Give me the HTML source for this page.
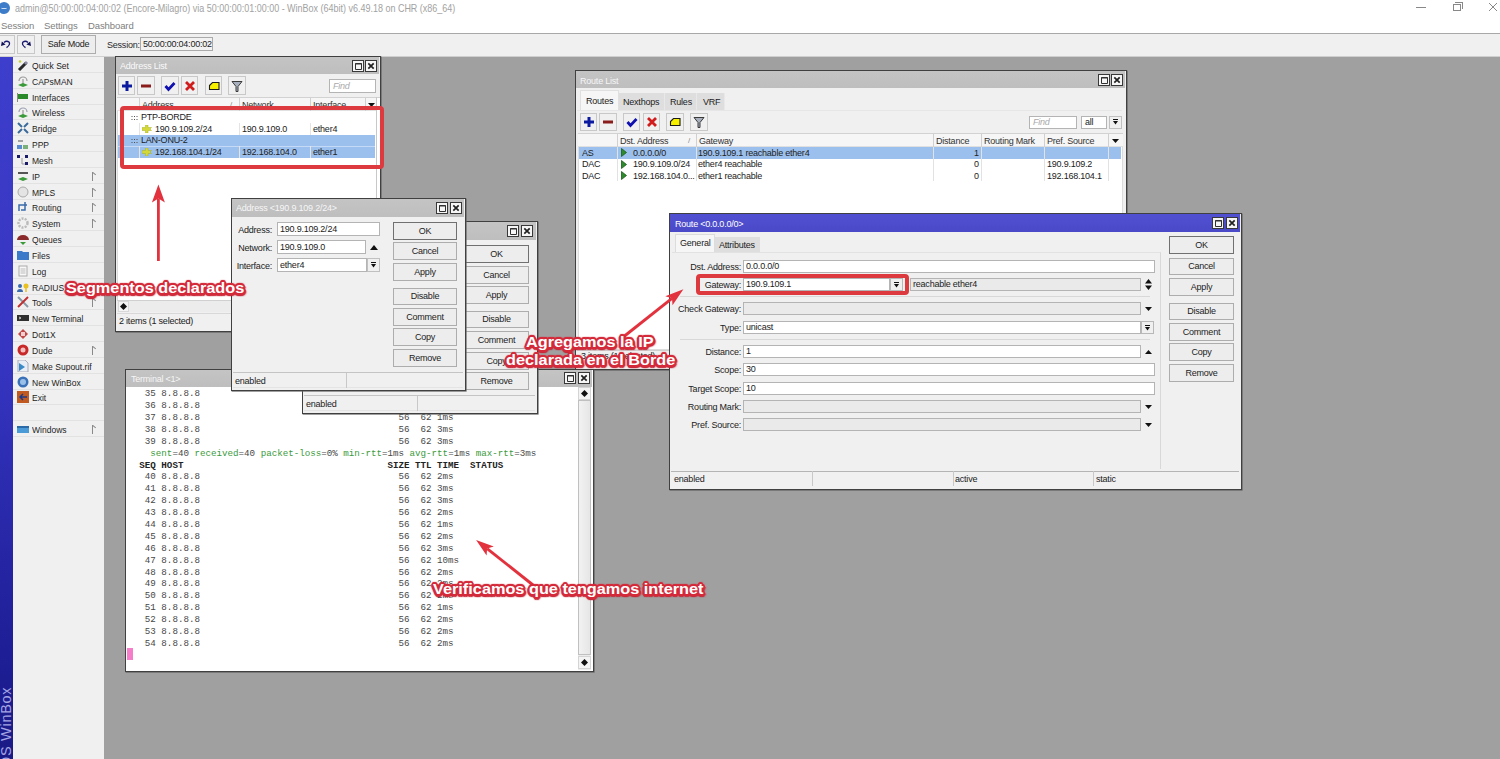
<!DOCTYPE html><html><head><meta charset="utf-8"><style>

*{box-sizing:border-box;margin:0;padding:0}
html,body{width:1500px;height:759px;overflow:hidden;background:#a0a0a0;font-family:"Liberation Sans",sans-serif;font-size:9px;color:#2a2a2a;letter-spacing:-0.22px}
.a{position:absolute}
.t{position:absolute;white-space:pre;line-height:1}
.win{position:absolute;background:#f0f0f0;border:1px solid #404040;box-shadow:0.6px 0.6px 0 #606060;overflow:hidden}
.tl{position:absolute;left:0;top:0;right:0;height:17px;background:#acacac}
.tl span{position:absolute;left:4px;top:4px;color:#fff;white-space:pre}
.wb{position:absolute;width:12px;height:12px;border:1px solid #383838;background:#f6f6f6}
.btn{position:absolute;background:#ededed;border:1px solid #adadad;text-align:center;color:#222;white-space:pre}
.fld{position:absolute;background:#fff;border:1px solid #b4b4b4;padding-left:2px;white-space:pre;color:#222;overflow:hidden}
.fldg{background:#eaeaea}
.lbl{position:absolute;text-align:right;white-space:pre;color:#222}
.sb{position:absolute;height:15px;background:#f0f0f0;border-top:1px solid #d4d4d4}
.sb span{position:absolute;top:3px;white-space:pre}
.sbd{position:absolute;top:1px;width:1px;height:13px;background:#c4c4c4}
.tbn{position:absolute;border:1px solid #c8c8c8;background:#f0f0f0}
.mi{position:absolute;left:0;width:91px;height:16px;border-bottom:1px solid #e2e2e2}
.mi span{position:absolute;left:19px;top:4px;white-space:pre;color:#1e1e1e;line-height:1;font-size:9.8px;letter-spacing:0;transform:scaleX(0.87);transform-origin:0 0}
.mi .ic{position:absolute;left:4px;top:2px;width:12px;height:12px}
.mi .ar{position:absolute;left:79px;top:4px;width:4px;height:9px;border-left:1px solid #8a8a8a}
.mi .ar:after{content:"";position:absolute;left:0;top:0;width:4px;height:1px;background:#8a8a8a;transform:rotate(40deg);transform-origin:0 0}
.hdr{position:absolute;background:#f6f6f6;border-top:1px solid #d2d2d2;border-bottom:1px solid #e0e0e0}
.hc{position:absolute;top:0;height:100%;border-right:1px solid #d4d4d4}
.row{position:absolute;white-space:pre}
.ann{position:absolute;white-space:pre;font-weight:bold;font-size:16.3px;color:#fff;line-height:1;letter-spacing:0;transform:scaleY(0.94);transform-origin:0 0;
 text-shadow:0 0 1px #d42a3a,2px 0 0 #d42a3a,-2px 0 0 #d42a3a,0 2px 0 #d42a3a,0 -2px 0 #d42a3a,1.5px 1.5px 0 #d42a3a,-1.5px 1.5px 0 #d42a3a,1.5px -1.5px 0 #d42a3a,-1.5px -1.5px 0 #d42a3a,2.5px 1px 1px #d42a3a,-2.5px 1px 1px #d42a3a,1px 2.5px 1px #c82636,-1px 2.5px 1px #c82636,1px -2.5px 1px #d42a3a,-1px -2.5px 1px #d42a3a,2px 2px 2px #b82434}

</style></head><body>
<div class="a" style="left:0;top:0;width:1500px;height:33px;background:#fff"></div>
<div class="a" style="left:-2px;top:2px;width:12px;height:12px;border-radius:50%;background:#3c7cc8"></div>
<div class="a" style="left:1px;top:6px;width:6px;height:3px;border-bottom:1px solid #cfe0f4;border-radius:0 0 50% 50%"></div>
<div class="t" style="left:14.5px;top:3px;color:#a2a2a2;letter-spacing:0;font-size:10.5px;transform:scaleX(0.855);transform-origin:0 0">admin@50:00:00:04:00:02 (Encore-Milagro) via 50:00:00:01:00:00 - WinBox (64bit) v6.49.18 on CHR (x86_64)</div>
<div class="t" style="left:1px;top:20.5px;color:#808080;font-size:9.5px;letter-spacing:-0.1px">Session</div>
<div class="t" style="left:44px;top:20.5px;color:#808080;font-size:9.5px;letter-spacing:-0.1px">Settings</div>
<div class="t" style="left:88px;top:20.5px;color:#808080;font-size:9.5px;letter-spacing:-0.1px">Dashboard</div>
<div class="a" style="left:1416px;top:7px;width:10px;height:1px;background:#888"></div>
<div class="a" style="left:1453px;top:4px;width:8px;height:7px;border:1px solid #888"></div>
<div class="a" style="left:1455px;top:2px;width:8px;height:7px;border-top:1px solid #888;border-right:1px solid #888"></div>
<svg class="a" style="left:1488px;top:2px" width="10" height="10"><path d="M1 1L9 9M9 1L1 9" stroke="#888" stroke-width="1"/></svg>
<div class="a" style="left:0;top:33px;width:1500px;height:24px;background:#f0f0f0;border-top:1px solid #a8a8a8;border-bottom:1px solid #cfcfcf"></div>
<div class="tbn" style="left:-1px;top:35px;width:16px;height:19px"></div>
<div class="tbn" style="left:17px;top:35px;width:18px;height:19px"></div>
<svg class="a" style="left:0px;top:39px" width="13" height="11"><path d="M4 3.5 Q6.5 1.2 9 3 Q10.8 5.5 6.5 8.6" fill="none" stroke="#1a1a6e" stroke-width="1.3"/><path d="M1 7 L1.8 2.6 L5.6 5.4Z" fill="#10105a"/></svg>
<svg class="a" style="left:19px;top:39px" width="13" height="11"><path d="M9 3.5 Q6.5 1.2 4 3 Q2.2 5.5 6.5 8.6" fill="none" stroke="#1a1a6e" stroke-width="1.3"/><path d="M12 7 L11.2 2.6 L7.4 5.4Z" fill="#10105a"/></svg>
<div class="btn" style="left:41px;top:35px;width:55px;height:19px;line-height:17px">Safe Mode</div>
<div class="t" style="left:107px;top:41px">Session:</div>
<div class="fld" style="left:140px;top:37px;width:73px;height:14px;line-height:12px;background:#f2f2f2;border-color:#aaa">50:00:00:04:00:02</div>
<div class="a" style="left:0;top:57px;width:13px;height:702px;background:linear-gradient(#3e3ecc,#3434c0 45%,#1e1e96 85%,#1a1a86)"></div>
<div class="t" style="left:-0.7px;top:767.7px;color:#a4a4e4;font-size:14.5px;letter-spacing:0.7px;transform:rotate(-90deg);transform-origin:0 0">OS WinBox</div>
<div class="a" style="left:13px;top:57px;width:91px;height:702px;background:#f0f0f0"></div>
<div class="mi" style="left:13px;top:57.00px"><svg class="ic" viewBox="0 0 12 12"><path d="M2 11 L9 4" stroke="#2a2a2a" stroke-width="3"/><path d="M8 5 L10 3" stroke="#8a8aa0" stroke-width="3"/><circle cx="3" cy="2.5" r="1.3" fill="#c8d040"/></svg><span>Quick Set</span></div>
<div class="mi" style="left:13px;top:72.83px"><svg class="ic" viewBox="0 0 12 12"><path d="M2 6 A4 4 0 0 1 10 6" fill="none" stroke="#9a9a9a" stroke-width="1.2"/><path d="M6 4 V10" stroke="#888" stroke-width="1"/><path d="M1 10 L6 8 L11 10 L6 12Z" fill="#3a9a3a"/></svg><span>CAPsMAN</span></div>
<div class="mi" style="left:13px;top:88.66px"><svg class="ic" viewBox="0 0 12 12"><rect x="1" y="3" width="10" height="5" fill="#2a8a2a"/><rect x="0" y="2" width="1" height="9" fill="#888"/></svg><span>Interfaces</span></div>
<div class="mi" style="left:13px;top:104.49px"><svg class="ic" viewBox="0 0 12 12"><path d="M2 6 A4 4 0 0 1 10 6" fill="none" stroke="#9aa0b0" stroke-width="1.2"/><path d="M6 4 V10" stroke="#888" stroke-width="1"/><path d="M1 10 L6 8 L11 10 L6 12Z" fill="#3a9a3a"/></svg><span>Wireless</span></div>
<div class="mi" style="left:13px;top:120.32px"><svg class="ic" viewBox="0 0 12 12"><path d="M1 1L5 5M11 1L7 5M1 11L5 7M11 11L7 7" stroke="#3a6a9a" stroke-width="2"/></svg><span>Bridge</span></div>
<div class="mi" style="left:13px;top:136.15px"><svg class="ic" viewBox="0 0 12 12"><path d="M1 3H6" stroke="#555" stroke-width="1"/><rect x="0" y="7" width="5" height="4" fill="#5a8ad0"/><rect x="6" y="7" width="5" height="4" fill="#7ab07a"/></svg><span>PPP</span></div>
<div class="mi" style="left:13px;top:151.98px"><svg class="ic" viewBox="0 0 12 12"><rect x="0" y="1" width="3" height="3" fill="#1a1a6a"/><rect x="8" y="1" width="3" height="3" fill="#1a1a6a"/><rect x="8" y="8" width="3" height="3" fill="#1a1a6a"/><path d="M5 4V10H8" stroke="#999" fill="none"/></svg><span>Mesh</span></div>
<div class="mi" style="left:13px;top:167.81px"><svg class="ic" viewBox="0 0 12 12"><path d="M1 3H11" stroke="#555" stroke-width="2"/><path d="M1 9 L6 7 L11 9 L6 11Z" fill="#3a9a3a"/></svg><span>IP</span><div class="ar"></div></div>
<div class="mi" style="left:13px;top:183.64px"><svg class="ic" viewBox="0 0 12 12"><circle cx="6" cy="6" r="5" fill="#e4e4e4" stroke="#aaa"/></svg><span>MPLS</span><div class="ar"></div></div>
<div class="mi" style="left:13px;top:199.47px"><svg class="ic" viewBox="0 0 12 12"><path d="M2 10 V4 H10 M8 1 V9 H4" stroke="#3a6aa8" stroke-width="1.5" fill="none"/></svg><span>Routing</span><div class="ar"></div></div>
<div class="mi" style="left:13px;top:215.30px"><svg class="ic" viewBox="0 0 12 12"><circle cx="6" cy="6" r="4.5" fill="none" stroke="#bbb" stroke-width="2.5" stroke-dasharray="2 1.2"/></svg><span>System</span><div class="ar"></div></div>
<div class="mi" style="left:13px;top:231.13px"><svg class="ic" viewBox="0 0 12 12"><path d="M0 7 A6 5 0 0 1 12 7Z" fill="#8a2a2a"/><path d="M3 9H9L6 12Z" fill="#3a9a3a"/></svg><span>Queues</span></div>
<div class="mi" style="left:13px;top:246.96px"><svg class="ic" viewBox="0 0 12 12"><path d="M0 2H5L6 3H12V11H0Z" fill="#3a7ac8"/></svg><span>Files</span></div>
<div class="mi" style="left:13px;top:262.79px"><svg class="ic" viewBox="0 0 12 12"><rect x="2" y="1" width="8" height="10" fill="#f8f8f8" stroke="#aaa"/><path d="M3.5 4H8.5M3.5 6H8.5M3.5 8H8.5" stroke="#bbb"/></svg><span>Log</span></div>
<div class="mi" style="left:13px;top:278.62px"><svg class="ic" viewBox="0 0 12 12"><circle cx="3" cy="5" r="2" fill="#3a6ab0"/><path d="M0 11 A3 3 0 0 1 6 11Z" fill="#3a6ab0"/><circle cx="9" cy="5" r="2.5" fill="#e8c020"/><path d="M9 7V11" stroke="#e8c020" stroke-width="1.5"/></svg><span>RADIUS</span></div>
<div class="mi" style="left:13px;top:294.45px"><svg class="ic" viewBox="0 0 12 12"><path d="M1 1L11 11" stroke="#8a9aa8" stroke-width="2"/><path d="M11 1L1 11" stroke="#c03030" stroke-width="2"/></svg><span>Tools</span><div class="ar"></div></div>
<div class="mi" style="left:13px;top:310.28px"><svg class="ic" viewBox="0 0 12 12"><rect x="0" y="3" width="12" height="6" fill="#303030"/><path d="M2 5L4 6L2 7" stroke="#ccc" fill="none"/></svg><span>New Terminal</span></div>
<div class="mi" style="left:13px;top:326.11px"><svg class="ic" viewBox="0 0 12 12"><path d="M6 1L11 6L6 11L1 6Z" fill="#c04848"/><rect x="4" y="4" width="4" height="4" fill="#f0d0d0"/></svg><span>Dot1X</span></div>
<div class="mi" style="left:13px;top:341.94px"><svg class="ic" viewBox="0 0 12 12"><circle cx="6" cy="6" r="5.5" fill="#c82828"/><circle cx="6" cy="6" r="2.5" fill="#f0c0c0"/></svg><span>Dude</span><div class="ar"></div></div>
<div class="mi" style="left:13px;top:357.77px"><svg class="ic" viewBox="0 0 12 12"><path d="M1 0H8L11 3V12H1Z" fill="#e8eef6" stroke="#aab"/><path d="M2 3L8 7L2 11Z" fill="#3a8ac8"/></svg><span>Make Supout.rif</span></div>
<div class="mi" style="left:13px;top:373.60px"><svg class="ic" viewBox="0 0 12 12"><circle cx="6" cy="6" r="5.5" fill="#3a70b8"/><circle cx="6" cy="6" r="3" fill="#9ac0e8"/></svg><span>New WinBox</span></div>
<div class="mi" style="left:13px;top:389.43px"><svg class="ic" viewBox="0 0 12 12"><rect x="0" y="0" width="12" height="12" fill="#c05a20"/><path d="M3 6H10M6 3L3 6L6 9" stroke="#1a3a8a" stroke-width="1.5" fill="none"/></svg><span>Exit</span></div>
<div class="mi" style="left:13px;top:405.26px"></div>
<div class="mi" style="left:13px;top:421.09px"><svg class="ic" viewBox="0 0 12 12"><rect x="0" y="3" width="12" height="7" fill="#4a9ad8"/><rect x="0" y="3" width="12" height="2" fill="#2a6aa8"/></svg><span>Windows</span><div class="ar"></div></div>
<div class="win" style="left:115px;top:56px;width:266px;height:276px"></div>
<div class="a" style="left:116px;top:57px;width:263px;height:17px;background:linear-gradient(#c4c4c4,#bebebe)"></div>
<div class="t" style="left:120px;top:62px;color:#fafafa">Address List</div>
<div class="wb" style="left:352px;top:60px"><svg class="a" style="left:0;top:0" width="10" height="10"><path d="M2.5 2.5H8.5V8.5H2.5Z" fill="none" stroke="#303030" stroke-width="1"/><path d="M2 3H9" stroke="#303030" stroke-width="1"/></svg></div><div class="wb" style="left:365px;top:60px"><svg class="a" style="left:0;top:0" width="10" height="10"><path d="M2.3 2.3L7.7 7.7M7.7 2.3L2.3 7.7" stroke="#202020" stroke-width="1.7"/></svg></div>
<div class="tbn" style="left:118px;top:76px;width:17px;height:19px;display:flex;align-items:center;justify-content:center"><svg width="12" height="12" viewBox="0 0 12 12"><path d="M6 1V11M1 6H11" stroke="#0c1aa0" stroke-width="3"/></svg></div><div class="tbn" style="left:137px;top:76px;width:18px;height:19px;display:flex;align-items:center;justify-content:center"><svg width="12" height="12" viewBox="0 0 12 12"><path d="M1 6H11" stroke="#8a1c1c" stroke-width="3"/></svg></div><div class="tbn" style="left:161px;top:76px;width:18px;height:19px;display:flex;align-items:center;justify-content:center"><svg width="12" height="12" viewBox="0 0 12 12"><path d="M1.5 6L4.5 9.5L10.5 3" stroke="#1010b0" stroke-width="2.8" fill="none"/></svg></div><div class="tbn" style="left:181px;top:76px;width:17px;height:19px;display:flex;align-items:center;justify-content:center"><svg width="12" height="12" viewBox="0 0 12 12"><path d="M2 2L10 10M10 2L2 10" stroke="#d01c1c" stroke-width="2.8"/></svg></div><div class="tbn" style="left:205px;top:76px;width:17px;height:19px;display:flex;align-items:center;justify-content:center"><svg width="12" height="12" viewBox="0 0 12 12"><path d="M1.5 5.5L4.5 2.5H11V9.5H1.5Z" fill="#f4f000" stroke="#1a1a1a" stroke-width="1.1" stroke-linejoin="miter"/></svg></div><div class="tbn" style="left:228px;top:76px;width:18px;height:19px;display:flex;align-items:center;justify-content:center"><svg width="12" height="12" viewBox="0 0 12 12"><path d="M1 1.5H11L7 6.5V11.5H5V6.5Z" fill="#a8b0c0" stroke="#3a3a3a" stroke-width="1"/></svg></div>
<div class="fld" style="left:329px;top:79px;width:47px;height:14px;color:#aaa;font-style:italic;line-height:12px;padding-left:3px">Find</div>
<div class="a" style="left:117px;top:97px;width:263px;height:204px;background:#fff;border-top:1px solid #d0d0d0;border-left:1px solid #dcdcdc"></div>
<div class="a" style="left:376px;top:97px;width:1px;height:204px;background:#c8c8c8"></div>
<div class="hdr" style="left:117px;top:97px;width:259px;height:14px"></div>
<div class="a" style="left:139px;top:98px;width:1px;height:13px;background:#d0d0d0"></div>
<div class="a" style="left:239px;top:98px;width:1px;height:13px;background:#d0d0d0"></div>
<div class="a" style="left:310px;top:98px;width:1px;height:13px;background:#d0d0d0"></div>
<div class="a" style="left:365px;top:98px;width:1px;height:13px;background:#d0d0d0"></div>
<div class="t" style="left:142px;top:101px;color:#333">Address</div>
<div class="t" style="left:230px;top:101px;color:#888;font-size:8px">/</div>
<div class="t" style="left:242px;top:101px;color:#333">Network</div>
<div class="t" style="left:313px;top:101px;color:#333">Interface</div>
<svg class="a" style="left:367.5px;top:102.5px" width="7" height="4"><path d="M0 0H7L3.5 4Z" fill="#111"/></svg>
<div class="a" style="left:118px;top:135px;width:257px;height:23px;background:#9cc0ee"></div>
<div class="a" style="left:118px;top:146px;width:257px;height:1px;background:#c4daf6"></div>
<div class="a" style="left:139px;top:123px;width:1px;height:12px;background:#e4e4e4"></div>
<div class="a" style="left:239px;top:123px;width:1px;height:12px;background:#e4e4e4"></div>
<div class="a" style="left:310px;top:123px;width:1px;height:12px;background:#e4e4e4"></div>
<div class="a" style="left:139px;top:146px;width:1px;height:12px;background:#e4e4e4"></div>
<div class="a" style="left:239px;top:146px;width:1px;height:12px;background:#e4e4e4"></div>
<div class="a" style="left:310px;top:146px;width:1px;height:12px;background:#e4e4e4"></div>
<svg class="a" style="left:131px;top:114px" width="7" height="7"><path d="M0.5 2.5h1M3 2.5h1M5.5 2.5h1M0.5 5.5h1M3 5.5h1M5.5 5.5h1" stroke="#505050" stroke-width="1"/></svg>
<div class="t" style="left:141px;top:113px;color:#222">PTP-BORDE</div>
<svg class="a" style="left:142px;top:125px" width="10" height="8"><path d="M0 2.5H3.5V0H6V2.5H9.5L8 4L9.5 5.5H6V8H3.5V5.5H0Z" fill="#d4d838" stroke="#a8b020" stroke-width="0.5"/></svg>
<div class="t" style="left:155px;top:125px;color:#222">190.9.109.2/24</div>
<div class="t" style="left:242px;top:125px;color:#222">190.9.109.0</div>
<div class="t" style="left:313px;top:125px;color:#222">ether4</div>
<svg class="a" style="left:131px;top:137px" width="7" height="7"><path d="M0.5 2.5h1M3 2.5h1M5.5 2.5h1M0.5 5.5h1M3 5.5h1M5.5 5.5h1" stroke="#505050" stroke-width="1"/></svg>
<div class="t" style="left:141px;top:136px;color:#222">LAN-ONU-2</div>
<svg class="a" style="left:142px;top:148px" width="10" height="8"><path d="M0 2.5H3.5V0H6V2.5H9.5L8 4L9.5 5.5H6V8H3.5V5.5H0Z" fill="#d4d838" stroke="#a8b020" stroke-width="0.5"/></svg>
<div class="t" style="left:155px;top:148px;color:#222">192.168.104.1/24</div>
<div class="t" style="left:242px;top:148px;color:#222">192.168.104.0</div>
<div class="t" style="left:313px;top:148px;color:#222">ether1</div>
<div class="a" style="left:117px;top:300px;width:259px;height:12px;background:#ececec;border-top:1px solid #d0d0d0"></div>
<div class="a" style="left:118px;top:301px;width:11px;height:11px;background:#f4f4f4;border:1px solid #d8d8d8"></div>
<svg class="a" style="left:120px;top:303px" width="7" height="7"><path d="M0 3.5L3.5 0L7 3.5L3.5 7Z" fill="#111"/></svg>
<div class="a" style="left:117px;top:313px;width:259px;height:16px;background:#f0f0f0;border-top:1px solid #d8d8d8"></div>
<div class="t" style="left:119px;top:317px;color:#222">2 items (1 selected)</div>
<div class="win" style="left:575px;top:70px;width:552px;height:300px"></div>
<div class="a" style="left:576px;top:71px;width:549px;height:17px;background:linear-gradient(#c4c4c4,#bebebe)"></div>
<div class="t" style="left:580px;top:77px;color:#f6f6f6">Route List</div>
<div class="wb" style="left:1098px;top:74px"><svg class="a" style="left:0;top:0" width="10" height="10"><path d="M2.5 2.5H8.5V8.5H2.5Z" fill="none" stroke="#303030" stroke-width="1"/><path d="M2 3H9" stroke="#303030" stroke-width="1"/></svg></div><div class="wb" style="left:1111px;top:74px"><svg class="a" style="left:0;top:0" width="10" height="10"><path d="M2.3 2.3L7.7 7.7M7.7 2.3L2.3 7.7" stroke="#202020" stroke-width="1.7"/></svg></div>
<div class="a" style="left:580px;top:90px;width:39px;height:20px;background:#f6f6f6;border:1px solid #e0e0e0;border-bottom:none"></div>
<div class="t" style="left:586px;top:97px;color:#222">Routes</div>
<div class="a" style="left:619px;top:93px;width:46px;height:17px;background:#dedede;border-right:1px solid #e8e8e8"></div>
<div class="t" style="left:623px;top:98px;color:#222">Nexthops</div>
<div class="a" style="left:665px;top:93px;width:32px;height:17px;background:#dedede;border-right:1px solid #e8e8e8"></div>
<div class="t" style="left:670px;top:98px;color:#222">Rules</div>
<div class="a" style="left:697px;top:93px;width:28px;height:17px;background:#dedede;border-right:1px solid #e8e8e8"></div>
<div class="t" style="left:703px;top:98px;color:#222">VRF</div>
<div class="a" style="left:577px;top:110px;width:545px;height:1px;background:#e6e6e6"></div>
<div class="tbn" style="left:580px;top:113px;width:17px;height:18px;display:flex;align-items:center;justify-content:center"><svg width="12" height="12" viewBox="0 0 12 12"><path d="M6 1V11M1 6H11" stroke="#0c1aa0" stroke-width="3"/></svg></div><div class="tbn" style="left:599px;top:113px;width:18px;height:18px;display:flex;align-items:center;justify-content:center"><svg width="12" height="12" viewBox="0 0 12 12"><path d="M1 6H11" stroke="#8a1c1c" stroke-width="3"/></svg></div><div class="tbn" style="left:623px;top:113px;width:17px;height:18px;display:flex;align-items:center;justify-content:center"><svg width="12" height="12" viewBox="0 0 12 12"><path d="M1.5 6L4.5 9.5L10.5 3" stroke="#1010b0" stroke-width="2.8" fill="none"/></svg></div><div class="tbn" style="left:643px;top:113px;width:17px;height:18px;display:flex;align-items:center;justify-content:center"><svg width="12" height="12" viewBox="0 0 12 12"><path d="M2 2L10 10M10 2L2 10" stroke="#d01c1c" stroke-width="2.8"/></svg></div><div class="tbn" style="left:666px;top:113px;width:18px;height:18px;display:flex;align-items:center;justify-content:center"><svg width="12" height="12" viewBox="0 0 12 12"><path d="M1.5 5.5L4.5 2.5H11V9.5H1.5Z" fill="#f4f000" stroke="#1a1a1a" stroke-width="1.1" stroke-linejoin="miter"/></svg></div><div class="tbn" style="left:690px;top:113px;width:18px;height:18px;display:flex;align-items:center;justify-content:center"><svg width="12" height="12" viewBox="0 0 12 12"><path d="M1 1.5H11L7 6.5V11.5H5V6.5Z" fill="#a8b0c0" stroke="#3a3a3a" stroke-width="1"/></svg></div>
<div class="fld" style="left:1029px;top:116px;width:48px;height:13px;color:#aaa;font-style:italic;line-height:11px;padding-left:3px">Find</div>
<div class="fld" style="left:1081px;top:116px;width:26px;height:13px;line-height:11px;padding-left:3px">all</div>
<div class="a" style="left:1109px;top:116px;width:13px;height:13px;background:#f0f0f0;border:1px solid #c0c0c0"></div>
<svg class="a" style="left:1112px;top:118px" width="7" height="8"><path d="M1 1.5H6" stroke="#111" stroke-width="1"/><path d="M1 3H6L3.5 6.5Z" fill="#111"/></svg>
<div class="a" style="left:578px;top:133px;width:545px;height:217px;background:#fff;border:1px solid #dcdcdc"></div>
<div class="hdr" style="left:578px;top:133px;width:545px;height:14px"></div>
<div class="a" style="left:617px;top:134px;width:1px;height:13px;background:#d0d0d0"></div>
<div class="a" style="left:696px;top:134px;width:1px;height:13px;background:#d0d0d0"></div>
<div class="a" style="left:933px;top:134px;width:1px;height:13px;background:#d0d0d0"></div>
<div class="a" style="left:981px;top:134px;width:1px;height:13px;background:#d0d0d0"></div>
<div class="a" style="left:1044px;top:134px;width:1px;height:13px;background:#d0d0d0"></div>
<div class="a" style="left:1108px;top:134px;width:1px;height:13px;background:#d0d0d0"></div>
<div class="t" style="left:620px;top:137px;color:#333">Dst. Address</div>
<div class="t" style="left:699px;top:137px;color:#333">Gateway</div>
<div class="t" style="left:936px;top:137px;color:#333">Distance</div>
<div class="t" style="left:984px;top:137px;color:#333">Routing Mark</div>
<div class="t" style="left:1047px;top:137px;color:#333">Pref. Source</div>
<div class="t" style="left:688px;top:137px;color:#888;font-size:8px">/</div>
<svg class="a" style="left:1112px;top:139px" width="7" height="4"><path d="M0 0H7L3.5 4Z" fill="#111"/></svg>
<div class="a" style="left:579px;top:147px;width:542px;height:12px;background:#9cc0ee"></div>
<div class="a" style="left:617px;top:147.0px;width:1px;height:11.4px;background:#e2e2e2"></div>
<div class="a" style="left:696px;top:147.0px;width:1px;height:11.4px;background:#e2e2e2"></div>
<div class="a" style="left:933px;top:147.0px;width:1px;height:11.4px;background:#e2e2e2"></div>
<div class="a" style="left:981px;top:147.0px;width:1px;height:11.4px;background:#e2e2e2"></div>
<div class="a" style="left:1044px;top:147.0px;width:1px;height:11.4px;background:#e2e2e2"></div>
<div class="a" style="left:1108px;top:147.0px;width:1px;height:11.4px;background:#e2e2e2"></div>
<div class="t" style="left:582px;top:149.0px;color:#222">AS</div>
<svg class="a" style="left:621px;top:148px" width="6" height="9"><path d="M0.5 0.5L5.5 4.5L0.5 8.5Z" fill="#2e8a2e" stroke="#1a5a1a" stroke-width="0.8"/></svg>
<div class="t" style="left:633px;top:149.0px;color:#222">0.0.0.0/0</div>
<div class="t" style="left:698px;top:149.0px;color:#222">190.9.109.1 reachable ether4</div>
<div class="t" style="left:974px;top:149.0px;color:#222">1</div>
<div class="t" style="left:1047px;top:149.0px;color:#222"></div>
<div class="a" style="left:617px;top:158.4px;width:1px;height:11.4px;background:#e2e2e2"></div>
<div class="a" style="left:696px;top:158.4px;width:1px;height:11.4px;background:#e2e2e2"></div>
<div class="a" style="left:933px;top:158.4px;width:1px;height:11.4px;background:#e2e2e2"></div>
<div class="a" style="left:981px;top:158.4px;width:1px;height:11.4px;background:#e2e2e2"></div>
<div class="a" style="left:1044px;top:158.4px;width:1px;height:11.4px;background:#e2e2e2"></div>
<div class="a" style="left:1108px;top:158.4px;width:1px;height:11.4px;background:#e2e2e2"></div>
<div class="t" style="left:582px;top:160.4px;color:#222">DAC</div>
<svg class="a" style="left:621px;top:160px" width="6" height="9"><path d="M0.5 0.5L5.5 4.5L0.5 8.5Z" fill="#2e8a2e" stroke="#1a5a1a" stroke-width="0.8"/></svg>
<div class="t" style="left:633px;top:160.4px;color:#222">190.9.109.0/24</div>
<div class="t" style="left:698px;top:160.4px;color:#222">ether4 reachable</div>
<div class="t" style="left:974px;top:160.4px;color:#222">0</div>
<div class="t" style="left:1047px;top:160.4px;color:#222">190.9.109.2</div>
<div class="a" style="left:617px;top:169.8px;width:1px;height:11.4px;background:#e2e2e2"></div>
<div class="a" style="left:696px;top:169.8px;width:1px;height:11.4px;background:#e2e2e2"></div>
<div class="a" style="left:933px;top:169.8px;width:1px;height:11.4px;background:#e2e2e2"></div>
<div class="a" style="left:981px;top:169.8px;width:1px;height:11.4px;background:#e2e2e2"></div>
<div class="a" style="left:1044px;top:169.8px;width:1px;height:11.4px;background:#e2e2e2"></div>
<div class="a" style="left:1108px;top:169.8px;width:1px;height:11.4px;background:#e2e2e2"></div>
<div class="t" style="left:582px;top:171.8px;color:#222">DAC</div>
<svg class="a" style="left:621px;top:171px" width="6" height="9"><path d="M0.5 0.5L5.5 4.5L0.5 8.5Z" fill="#2e8a2e" stroke="#1a5a1a" stroke-width="0.8"/></svg>
<div class="t" style="left:633px;top:171.8px;color:#222">192.168.104.0...</div>
<div class="t" style="left:698px;top:171.8px;color:#222">ether1 reachable</div>
<div class="t" style="left:974px;top:171.8px;color:#222">0</div>
<div class="t" style="left:1047px;top:171.8px;color:#222">192.168.104.1</div>
<div class="a" style="left:577px;top:350px;width:548px;height:18px;background:#f0f0f0;border-top:1px solid #d0d0d0"></div>
<div class="t" style="left:581px;top:352px;color:#222">3 items (1 selected)</div>
<div class="win" style="left:125px;top:369px;width:469px;height:303px;background:#fff"></div>
<div class="a" style="left:126px;top:370px;width:466px;height:17px;background:linear-gradient(#c4c4c4,#bebebe)"></div>
<div class="t" style="left:131px;top:375px;color:#f6f6f6">Terminal &lt;1&gt;</div>
<div class="wb" style="left:564px;top:372px"><svg class="a" style="left:0;top:0" width="10" height="10"><path d="M2.5 2.5H8.5V8.5H2.5Z" fill="none" stroke="#303030" stroke-width="1"/><path d="M2 3H9" stroke="#303030" stroke-width="1"/></svg></div><div class="wb" style="left:578px;top:372px"><svg class="a" style="left:0;top:0" width="10" height="10"><path d="M2.3 2.3L7.7 7.7M7.7 2.3L2.3 7.7" stroke="#202020" stroke-width="1.7"/></svg></div>
<div class="a" style="left:578px;top:387px;width:13px;height:283px;background:#ececec"></div>
<div class="a" style="left:578px;top:400px;width:13px;height:255px;background:linear-gradient(90deg,#f2f2f2,#e6e6e6);border:1px solid #c0c0c0"></div>
<div class="a" style="left:578px;top:387px;width:13px;height:13px;background:#f4f4f4;border:1px solid #d4d4d4"></div>
<div class="a" style="left:578px;top:656px;width:13px;height:13px;background:#f4f4f4;border:1px solid #d4d4d4"></div>
<svg class="a" style="left:581px;top:390px" width="7" height="7"><path d="M0 3.5L3.5 0L7 3.5L3.5 7Z" fill="#111"/></svg>
<svg class="a" style="left:581px;top:659px" width="7" height="7"><path d="M0 3.5L3.5 0L7 3.5L3.5 7Z" fill="#111"/></svg>
<div class="t" style="left:139.3px;top:389.20px;font-family:'Liberation Mono',monospace;font-size:9.2px;letter-spacing:0;color:#484848"> 35 8.8.8.8                                    56  62 </div>
<div class="t" style="left:139.3px;top:401.09px;font-family:'Liberation Mono',monospace;font-size:9.2px;letter-spacing:0;color:#484848"> 36 8.8.8.8                                    56  62 </div>
<div class="t" style="left:139.3px;top:412.98px;font-family:'Liberation Mono',monospace;font-size:9.2px;letter-spacing:0;color:#484848"> 37 8.8.8.8                                    56  62 1ms</div>
<div class="t" style="left:139.3px;top:424.87px;font-family:'Liberation Mono',monospace;font-size:9.2px;letter-spacing:0;color:#484848"> 38 8.8.8.8                                    56  62 3ms</div>
<div class="t" style="left:139.3px;top:436.76px;font-family:'Liberation Mono',monospace;font-size:9.2px;letter-spacing:0;color:#484848"> 39 8.8.8.8                                    56  62 3ms</div>
<div class="t" style="left:139.3px;top:448.65px;font-family:'Liberation Mono',monospace;font-size:9.2px;letter-spacing:0;color:#484848">  <span style="color:#3a9a3a">sent</span>=40 <span style="color:#3a9a3a">received</span>=40 <span style="color:#3a9a3a">packet-loss</span>=0% <span style="color:#3a9a3a">min-rtt</span>=1ms <span style="color:#3a9a3a">avg-rtt</span>=1ms <span style="color:#3a9a3a">max-rtt</span>=3ms</div>
<div class="t" style="left:139.3px;top:460.54px;font-family:'Liberation Mono',monospace;font-size:9.2px;letter-spacing:0;color:#222;font-weight:bold">SEQ HOST                                     SIZE TTL TIME  STATUS</div>
<div class="t" style="left:139.3px;top:472.43px;font-family:'Liberation Mono',monospace;font-size:9.2px;letter-spacing:0;color:#484848"> 40 8.8.8.8                                    56  62 2ms</div>
<div class="t" style="left:139.3px;top:484.32px;font-family:'Liberation Mono',monospace;font-size:9.2px;letter-spacing:0;color:#484848"> 41 8.8.8.8                                    56  62 3ms</div>
<div class="t" style="left:139.3px;top:496.21px;font-family:'Liberation Mono',monospace;font-size:9.2px;letter-spacing:0;color:#484848"> 42 8.8.8.8                                    56  62 3ms</div>
<div class="t" style="left:139.3px;top:508.10px;font-family:'Liberation Mono',monospace;font-size:9.2px;letter-spacing:0;color:#484848"> 43 8.8.8.8                                    56  62 2ms</div>
<div class="t" style="left:139.3px;top:519.99px;font-family:'Liberation Mono',monospace;font-size:9.2px;letter-spacing:0;color:#484848"> 44 8.8.8.8                                    56  62 1ms</div>
<div class="t" style="left:139.3px;top:531.88px;font-family:'Liberation Mono',monospace;font-size:9.2px;letter-spacing:0;color:#484848"> 45 8.8.8.8                                    56  62 2ms</div>
<div class="t" style="left:139.3px;top:543.77px;font-family:'Liberation Mono',monospace;font-size:9.2px;letter-spacing:0;color:#484848"> 46 8.8.8.8                                    56  62 3ms</div>
<div class="t" style="left:139.3px;top:555.66px;font-family:'Liberation Mono',monospace;font-size:9.2px;letter-spacing:0;color:#484848"> 47 8.8.8.8                                    56  62 10ms</div>
<div class="t" style="left:139.3px;top:567.55px;font-family:'Liberation Mono',monospace;font-size:9.2px;letter-spacing:0;color:#484848"> 48 8.8.8.8                                    56  62 2ms</div>
<div class="t" style="left:139.3px;top:579.44px;font-family:'Liberation Mono',monospace;font-size:9.2px;letter-spacing:0;color:#484848"> 49 8.8.8.8                                    56  62 2ms</div>
<div class="t" style="left:139.3px;top:591.33px;font-family:'Liberation Mono',monospace;font-size:9.2px;letter-spacing:0;color:#484848"> 50 8.8.8.8                                    56  62 2ms</div>
<div class="t" style="left:139.3px;top:603.22px;font-family:'Liberation Mono',monospace;font-size:9.2px;letter-spacing:0;color:#484848"> 51 8.8.8.8                                    56  62 1ms</div>
<div class="t" style="left:139.3px;top:615.11px;font-family:'Liberation Mono',monospace;font-size:9.2px;letter-spacing:0;color:#484848"> 52 8.8.8.8                                    56  62 2ms</div>
<div class="t" style="left:139.3px;top:627.00px;font-family:'Liberation Mono',monospace;font-size:9.2px;letter-spacing:0;color:#484848"> 53 8.8.8.8                                    56  62 2ms</div>
<div class="t" style="left:139.3px;top:638.89px;font-family:'Liberation Mono',monospace;font-size:9.2px;letter-spacing:0;color:#484848"> 54 8.8.8.8                                    56  62 2ms</div>
<div class="a" style="left:127px;top:648px;width:6px;height:12px;background:#f57dca"></div>
<div class="win" style="left:302px;top:221px;width:236px;height:193px"></div>
<div class="a" style="left:303px;top:222px;width:233px;height:18px;background:linear-gradient(#c4c4c4,#bebebe)"></div>
<div class="wb" style="left:507px;top:225px"><svg class="a" style="left:0;top:0" width="10" height="10"><path d="M2.5 2.5H8.5V8.5H2.5Z" fill="none" stroke="#303030" stroke-width="1"/><path d="M2 3H9" stroke="#303030" stroke-width="1"/></svg></div><div class="wb" style="left:521px;top:225px"><svg class="a" style="left:0;top:0" width="10" height="10"><path d="M2.3 2.3L7.7 7.7M7.7 2.3L2.3 7.7" stroke="#202020" stroke-width="1.7"/></svg></div>
<div class="btn" style="left:464px;top:245px;width:65px;height:18px;line-height:16px;border-color:#707070;">OK</div>
<div class="btn" style="left:464px;top:266px;width:65px;height:18px;line-height:16px;">Cancel</div>
<div class="btn" style="left:464px;top:286px;width:65px;height:18px;line-height:16px;">Apply</div>
<div class="btn" style="left:464px;top:311px;width:65px;height:17px;line-height:15px;">Disable</div>
<div class="btn" style="left:464px;top:331px;width:65px;height:18px;line-height:16px;">Comment</div>
<div class="btn" style="left:464px;top:352px;width:65px;height:18px;line-height:16px;">Copy</div>
<div class="btn" style="left:464px;top:372px;width:65px;height:18px;line-height:16px;">Remove</div>
<div class="a" style="left:304px;top:394.5px;width:231px;height:16px;background:#f0f0f0;border-top:1px solid #c4c4c4;border-bottom:1px solid #e4e4e4"></div>
<div class="a" style="left:417px;top:395.5px;width:1px;height:15px;background:#c8c8c8"></div>
<div class="t" style="left:306px;top:399.5px;color:#222">enabled</div>
<div class="win" style="left:231px;top:198px;width:235px;height:193px"></div>
<div class="a" style="left:232px;top:199px;width:232px;height:18px;background:linear-gradient(#c4c4c4,#bebebe)"></div>
<div class="t" style="left:236px;top:204px;color:#f6f6f6">Address &lt;190.9.109.2/24&gt;</div>
<div class="wb" style="left:436px;top:202px"><svg class="a" style="left:0;top:0" width="10" height="10"><path d="M2.5 2.5H8.5V8.5H2.5Z" fill="none" stroke="#303030" stroke-width="1"/><path d="M2 3H9" stroke="#303030" stroke-width="1"/></svg></div><div class="wb" style="left:450px;top:202px"><svg class="a" style="left:0;top:0" width="10" height="10"><path d="M2.3 2.3L7.7 7.7M7.7 2.3L2.3 7.7" stroke="#202020" stroke-width="1.7"/></svg></div>
<div class="btn" style="left:393px;top:222px;width:64px;height:18px;line-height:16px;border-color:#707070;">OK</div>
<div class="btn" style="left:393px;top:242px;width:64px;height:18px;line-height:16px;">Cancel</div>
<div class="btn" style="left:393px;top:263px;width:64px;height:18px;line-height:16px;">Apply</div>
<div class="btn" style="left:393px;top:288px;width:64px;height:17px;line-height:15px;">Disable</div>
<div class="btn" style="left:393px;top:308px;width:64px;height:18px;line-height:16px;">Comment</div>
<div class="btn" style="left:393px;top:328px;width:64px;height:18px;line-height:16px;">Copy</div>
<div class="btn" style="left:393px;top:349px;width:64px;height:18px;line-height:16px;">Remove</div>
<div class="a" style="left:233px;top:371.5px;width:230px;height:16px;background:#f0f0f0;border-top:1px solid #c4c4c4;border-bottom:1px solid #e4e4e4"></div>
<div class="a" style="left:346px;top:372.5px;width:1px;height:15px;background:#c8c8c8"></div>
<div class="t" style="left:235px;top:376.5px;color:#222">enabled</div>
<div class="lbl" style="left:232px;top:224.5px;width:40px">Address:</div>
<div class="fld" style="left:277px;top:222px;width:103px;height:14px;line-height:12px">190.9.109.2/24</div>
<div class="lbl" style="left:232px;top:242.5px;width:40px">Network:</div>
<div class="fld" style="left:277px;top:240px;width:89px;height:14px;line-height:12px">190.9.109.0</div>
<svg class="a" style="left:370px;top:245px" width="8" height="5"><path d="M0 5H8L4 0Z" fill="#111"/></svg>
<div class="lbl" style="left:232px;top:260.5px;width:40px">Interface:</div>
<div class="fld" style="left:277px;top:258px;width:90px;height:14px;line-height:12px">ether4</div>
<div class="a" style="left:367px;top:258px;width:13px;height:14px;background:#f0f0f0;border:1px solid #c0c0c0"></div>
<svg class="a" style="left:370px;top:261px" width="7" height="8"><path d="M1 1.5H6" stroke="#111" stroke-width="1"/><path d="M1 3H6L3.5 6.5Z" fill="#111"/></svg>
<div class="win" style="left:669px;top:213px;width:573px;height:277px"></div>
<div class="a" style="left:670px;top:214px;width:570px;height:18px;background:linear-gradient(#5050d2,#4a4ac8)"></div>
<div class="t" style="left:675px;top:220px;color:#fff">Route &lt;0.0.0.0/0&gt;</div>
<div class="wb" style="left:1212px;top:217px"><svg class="a" style="left:0;top:0" width="10" height="10"><path d="M2.5 2.5H8.5V8.5H2.5Z" fill="none" stroke="#303030" stroke-width="1"/><path d="M2 3H9" stroke="#303030" stroke-width="1"/></svg></div><div class="wb" style="left:1226px;top:217px"><svg class="a" style="left:0;top:0" width="10" height="10"><path d="M2.3 2.3L7.7 7.7M7.7 2.3L2.3 7.7" stroke="#202020" stroke-width="1.7"/></svg></div>
<div class="a" style="left:675px;top:234px;width:40px;height:19px;background:#f6f6f6;border:1px solid #dcdcdc;border-bottom:none"></div>
<div class="t" style="left:680px;top:239px;color:#222">General</div>
<div class="a" style="left:715px;top:237px;width:45px;height:16px;background:#dedede"></div>
<div class="t" style="left:719px;top:241px;color:#222">Attributes</div>
<div class="a" style="left:672px;top:252px;width:489px;height:217px;border-top:1px solid #e2e2e2;border-right:1px solid #d8d8d8"></div>
<div class="btn" style="left:1169px;top:236px;width:65px;height:18px;line-height:16px;border-color:#707070;">OK</div>
<div class="btn" style="left:1169px;top:258px;width:65px;height:17px;line-height:15px;">Cancel</div>
<div class="btn" style="left:1169px;top:278px;width:65px;height:18px;line-height:16px;">Apply</div>
<div class="btn" style="left:1169px;top:303px;width:65px;height:17px;line-height:15px;">Disable</div>
<div class="btn" style="left:1169px;top:323px;width:65px;height:18px;line-height:16px;">Comment</div>
<div class="btn" style="left:1169px;top:343px;width:65px;height:18px;line-height:16px;">Copy</div>
<div class="btn" style="left:1169px;top:364px;width:65px;height:18px;line-height:16px;">Remove</div>
<div class="lbl" style="left:672px;top:262px;width:69px">Dst. Address:</div>
<div class="fld" style="left:743px;top:260px;width:412px;height:13px;line-height:11px">0.0.0.0/0</div>
<div class="lbl" style="left:672px;top:280px;width:69px">Gateway:</div>
<div class="fld" style="left:743px;top:278px;width:147px;height:13px;line-height:11px">190.9.109.1</div>
<div class="a" style="left:890px;top:278px;width:13px;height:13px;background:#f0f0f0;border:1px solid #b8b8b8"></div>
<svg class="a" style="left:893px;top:281px" width="7" height="8"><path d="M1 1.5H6" stroke="#111" stroke-width="1"/><path d="M1 3H6L3.5 6.5Z" fill="#111"/></svg>
<div class="lbl" style="left:672px;top:304px;width:69px">Check Gateway:</div>
<div class="fld fldg" style="left:743px;top:302px;width:398px;height:13px;line-height:11px"></div>
<svg class="a" style="left:1145px;top:306.5px" width="7" height="4"><path d="M0 0H7L3.5 4Z" fill="#111"/></svg>
<div class="lbl" style="left:672px;top:323px;width:69px">Type:</div>
<div class="fld" style="left:743px;top:321px;width:398px;height:13px;line-height:11px">unicast</div>
<div class="a" style="left:1141px;top:321px;width:13px;height:13px;background:#f0f0f0;border:1px solid #b8b8b8"></div>
<svg class="a" style="left:1144px;top:324px" width="7" height="8"><path d="M1 1.5H6" stroke="#111" stroke-width="1"/><path d="M1 3H6L3.5 6.5Z" fill="#111"/></svg>
<div class="lbl" style="left:672px;top:347px;width:69px">Distance:</div>
<div class="fld" style="left:743px;top:345px;width:398px;height:13px;line-height:11px">1</div>
<svg class="a" style="left:1145px;top:349.5px" width="7" height="4"><path d="M0 4H7L3.5 0Z" fill="#111"/></svg>
<div class="lbl" style="left:672px;top:365px;width:69px">Scope:</div>
<div class="fld" style="left:743px;top:363px;width:412px;height:13px;line-height:11px">30</div>
<div class="lbl" style="left:672px;top:384px;width:69px">Target Scope:</div>
<div class="fld" style="left:743px;top:382px;width:412px;height:13px;line-height:11px">10</div>
<div class="lbl" style="left:672px;top:402px;width:69px">Routing Mark:</div>
<div class="fld fldg" style="left:743px;top:400px;width:398px;height:13px;line-height:11px"></div>
<svg class="a" style="left:1145px;top:404.5px" width="7" height="4"><path d="M0 0H7L3.5 4Z" fill="#111"/></svg>
<div class="lbl" style="left:672px;top:420px;width:69px">Pref. Source:</div>
<div class="fld fldg" style="left:743px;top:418px;width:398px;height:13px;line-height:11px"></div>
<svg class="a" style="left:1145px;top:422.5px" width="7" height="4"><path d="M0 0H7L3.5 4Z" fill="#111"/></svg>
<div class="fld fldg" style="left:910px;top:278px;width:231px;height:13px;line-height:11px">reachable ether4</div>
<svg class="a" style="left:1145px;top:279px" width="7" height="11"><path d="M0 4.5H7L3.5 0Z M0 6.5H7L3.5 11Z" fill="#111"/></svg>
<div class="a" style="left:680px;top:296px;width:470px;height:1px;background:#d8d8d8"></div>
<div class="a" style="left:680px;top:339px;width:470px;height:1px;background:#d8d8d8"></div>
<div class="a" style="left:671px;top:471px;width:568px;height:17px;background:#f0f0f0;border-top:1px solid #b4b4b4"></div>
<div class="a" style="left:812px;top:471px;width:1px;height:15px;background:#c8c8c8"></div>
<div class="a" style="left:953px;top:471px;width:1px;height:15px;background:#c8c8c8"></div>
<div class="a" style="left:1093px;top:471px;width:1px;height:15px;background:#c8c8c8"></div>
<div class="t" style="left:674px;top:475px;color:#222">enabled</div>
<div class="t" style="left:955px;top:475px;color:#222">active</div>
<div class="t" style="left:1096px;top:475px;color:#222">static</div>
<div class="a" style="left:120px;top:106px;width:264px;height:63px;border:4px solid #dd3a40;border-radius:4px"></div>
<div class="a" style="left:696px;top:274px;width:213px;height:21px;border:4px solid #dd3a40;border-radius:4px"></div>
<svg class="a" style="left:138px;top:164px" width="40" height="116"><path d="M20.4 97.0 L20.4 34.5" stroke="#e2323e" stroke-width="2.8" stroke-linecap="butt"/><path d="M26.9 38.5 L20.4 20.5 L13.9 38.5 L20.4 34.5 Z" fill="#e2323e"/></svg>
<svg class="a" style="left:602px;top:269px" width="101" height="88"><path d="M20.0 69.0 L70.0 29.3" stroke="#e2323e" stroke-width="2.9" stroke-linecap="butt"/><path d="M70.5 36.3 L81.4 20.3 L63.3 27.3 L70.0 29.3 Z" fill="#e2323e"/></svg>
<svg class="a" style="left:456px;top:519px" width="96" height="85"><path d="M77.0 66.0 L31.1 29.6" stroke="#e2323e" stroke-width="2.9" stroke-linecap="butt"/><path d="M37.8 27.5 L20.1 20.9 L30.6 36.6 L31.1 29.6 Z" fill="#e2323e"/></svg>
<div class="ann" style="left:66px;top:280px">Segmentos declarados</div>
<div class="ann" style="left:526px;top:334px">Agregamos la IP</div>
<div class="ann" style="left:506px;top:352px">declarada en el Borde</div>
<div class="ann" style="left:433px;top:581px">Verificamos que tengamos internet</div>
</body></html>
